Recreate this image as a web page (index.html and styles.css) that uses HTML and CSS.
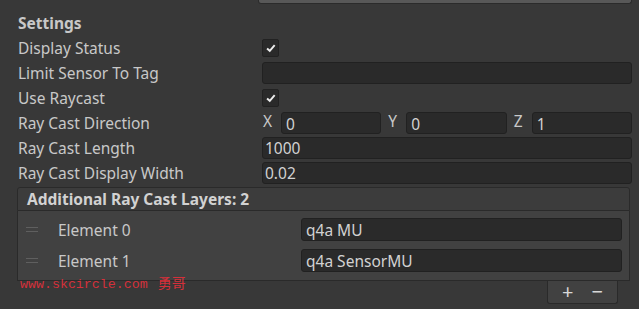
FILE: index.html
```html
<!DOCTYPE html>
<html>
<head>
<meta charset="utf-8">
<link rel="stylesheet" href="styles.css">
</head>
<body>
<div class="page">
  <div class="top-strip"><div class="top-button"></div></div>
  <div class="inspector">
    <div class="row header-row"><span class="label bold">Settings</span></div>
    <div class="row">
      <span class="label">Display Status</span>
      <span class="checkbox"><svg viewBox="0 0 16 16" width="16" height="16"><path d="M3.5 8.5 L6.6 11.2 L12.2 4.8" fill="none" stroke="#ececec" stroke-width="2.2"/></svg></span>
    </div>
    <div class="row">
      <span class="label">Limit Sensor To Tag</span>
      <span class="field"></span>
    </div>
    <div class="row">
      <span class="label">Use Raycast</span>
      <span class="checkbox"><svg viewBox="0 0 16 16" width="16" height="16"><path d="M3.5 8.5 L6.6 11.2 L12.2 4.8" fill="none" stroke="#ececec" stroke-width="2.2"/></svg></span>
    </div>
    <div class="row">
      <span class="label">Ray Cast Direction</span>
      <div class="vector">
        <div class="comp"><span class="axis">X</span><span class="field vfield">0</span></div>
        <div class="comp"><span class="axis">Y</span><span class="field vfield">0</span></div>
        <div class="comp"><span class="axis">Z</span><span class="field vfield">1</span></div>
      </div>
    </div>
    <div class="row">
      <span class="label">Ray Cast Length</span>
      <span class="field">1000</span>
    </div>
    <div class="row">
      <span class="label">Ray Cast Display Width</span>
      <span class="field">0.02</span>
    </div>
    <div class="list">
      <div class="list-header bold">Additional Ray Cast Layers: 2</div>
      <div class="list-body">
        <div class="element">
          <span class="handle"></span>
          <span class="el-label">Element 0</span>
          <span class="field el-field">q4a MU</span>
        </div>
        <div class="element">
          <span class="handle"></span>
          <span class="el-label">Element 1</span>
          <span class="field el-field">q4a SensorMU</span>
        </div>
      </div>
      <div class="list-footer-row">
        <div class="list-footer"><span class="btn">+</span><span class="btn">&minus;</span></div>
      </div>
    </div>
  </div>
  <div class="watermark">www.skcircle.com <span class="cjk">勇哥</span></div>
</div>
</body>
</html>
```
FILE: styles.css
```css
html, body {
  margin: 0;
  padding: 0;
  background: #383838;
}
.page {
  position: relative;
  width: 639px;
  height: 309px;
  overflow: hidden;
  font-family: "Noto Sans", "Open Sans", sans-serif;
  font-size: 15.5px;
  color: #c8c8c8;
}
.top-strip {
  height: 10px;
  padding-left: 258px;
  padding-right: 7px;
}
.top-button {
  height: 3px;
  background: #585858;
  border: 1px solid #2b2b2b;
  border-top: none;
  border-radius: 0 0 3px 3px;
}
.inspector {
  padding-left: 18px;
  padding-right: 7px;
}
.row {
  height: 25px;
  display: flex;
  align-items: center;
}
.label {
  width: 244px;
  flex: none;
  white-space: nowrap;
}
.bold {
  font-weight: bold;
}
.checkbox {
  width: 15px;
  height: 16px;
  background: #2a2a2a;
  border: 1px solid #222;
  border-radius: 2px;
  display: flex;
  align-items: center;
  justify-content: center;
}
.checkbox svg {
  width: 14px;
  height: 14px;
}
.field {
  flex: 1;
  background: #2a2a2a;
  border: 1px solid #212121;
  border-radius: 3px;
  box-sizing: border-box;
  height: 22px;
  padding-left: 2px;
  line-height: 21px;
  color: #d2d2d2;
  white-space: nowrap;
}
.vector {
  flex: 1;
  display: grid;
  grid-template-columns: 1fr 1fr 1fr;
  gap: 6px;
}
.comp {
  display: flex;
  align-items: center;
}
.axis {
  width: 19px;
  flex: none;
  padding-left: 1px;
  box-sizing: border-box;
  margin-top: -4px;
}
.vfield {
  padding-left: 4px;
  line-height: 23px;
}
.list {
  margin-top: 2px;
  margin-left: -1px;
  margin-right: 2px;
}
.list-header {
  height: 24px;
  box-sizing: border-box;
  background: #3c3c3c;
  border: 1px solid #2a2a2a;
  border-radius: 3px 3px 0 0;
  padding-left: 9px;
  line-height: 22px;
  color: #d2d2d2;
}
.list-body {
  background: #414141;
  border: 1px solid #2a2a2a;
  border-top: none;
  height: 70px;
  box-sizing: border-box;
  padding: 7px 7px 0 7px;
  display: flex;
  flex-direction: column;
  gap: 8px;
}
.element {
  height: 23px;
  display: flex;
  align-items: center;
}
.handle {
  width: 12px;
  height: 3px;
  border-top: 1px solid #5f5f5f;
  border-bottom: 1px solid #5f5f5f;
  margin-right: 20px;
  margin-left: 1px;
}
.el-label {
  width: 243px;
  flex: none;
}
.el-field {
  height: 23px;
  line-height: 22px;
  padding-left: 4px;
}
.list-footer-row {
  display: flex;
  justify-content: flex-end;
  padding-right: 12px;
}
.list-footer {
  width: 71px;
  height: 23px;
  box-sizing: border-box;
  background: #414141;
  border: 1px solid #2a2a2a;
  border-top: none;
  border-radius: 0 0 3px 3px;
  display: flex;
  justify-content: center;
  gap: 18px;
  font-size: 20px;
  line-height: 22px;
  color: #d8d8d8;
}
.watermark {
  position: absolute;
  left: 20px;
  top: 272px;
  font-family: "Liberation Mono", monospace;
  font-size: 13.3px;
  color: #d4303a;
  white-space: nowrap;
}
.watermark .cjk {
  font-family: "Noto Sans CJK SC", sans-serif;
  font-size: 14px;
  margin-left: 2px;
}
```
